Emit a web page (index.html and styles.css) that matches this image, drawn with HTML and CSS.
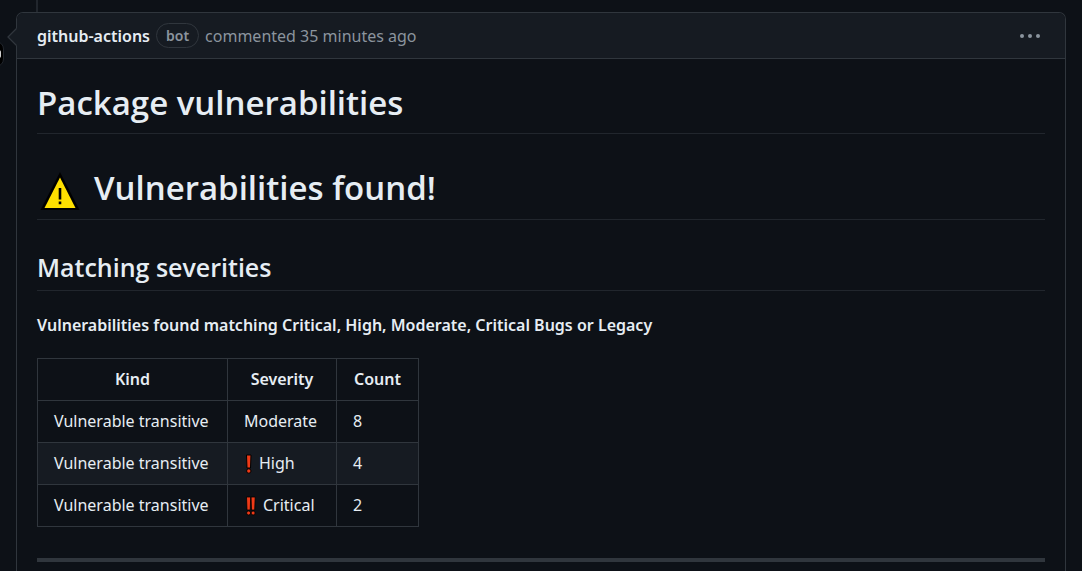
FILE: index.html
```html
<!DOCTYPE html>
<html lang="en">
<head>
<meta charset="utf-8">
<meta name="viewport" content="width=device-width, initial-scale=1">
<title>Package vulnerabilities</title>
<link rel="stylesheet" href="styles.css">
</head>
<body>
<main class="timeline">
  <span class="timeline-line"></span>
  <span class="avatar-edge"></span>
  <article class="comment">
    <svg class="comment-arrow" width="10" height="18" viewBox="0 0 10 18" aria-hidden="true"><path d="M10 0 1 9l9 9z" fill="#161b22"/><path d="M9.500 .5 1 9l8.500 8.500" fill="none" stroke="#30363d" stroke-width="1.300"/></svg>
    <header class="comment-header">
      <a class="author" href="#">github-actions</a>
      <span class="label">bot</span>
      <span class="meta">commented <a class="time" href="#">35 minutes ago</a></span>
      <button class="menu" type="button" aria-label="Show options"><svg width="22" height="6" viewBox="0 0 22 6" aria-hidden="true"><g fill="#8b949e"><circle cx="3" cy="3" r="2"/><circle cx="11" cy="3" r="2"/><circle cx="19" cy="3" r="2"/></g></svg></button>
    </header>
    <div class="comment-body">
      <h1 class="title">Package vulnerabilities</h1>
      <h1 class="title title-alert"><svg class="warning" width="40" height="40" viewBox="0 0 40 40" role="img" aria-label="Warning"><path d="M20 1 .5 39h39z" fill="#000"/><path d="M20 6.500 4.500 37h31z" fill="#ffe000"/><path d="M18.700 17h2.600v11.500h-2.600zM18.700 30.500h2.600v2.700h-2.600z" fill="#000"/></svg>Vulnerabilities found!</h1>
      <h2 class="subtitle">Matching severities</h2>
      <p class="summary"><strong>Vulnerabilities found matching Critical, High, Moderate, Critical Bugs or Legacy</strong></p>
      <table class="results">
        <thead>
          <tr><th class="kind" scope="col">Kind</th><th class="level" scope="col">Severity</th><th class="count" scope="col">Count</th></tr>
        </thead>
        <tbody>
          <tr><td>Vulnerable transitive</td><td>Moderate</td><td>8</td></tr>
          <tr><td>Vulnerable transitive</td><td><span class="severity"><svg width="10" height="20" viewBox="0 0 10 20" role="img" aria-label="Important"><path d="M2.500 1h4.500l-.5 13h-3.500z" fill="#f03a17" stroke="#000" stroke-linejoin="round"/><circle cx="4.800" cy="17" r="2.200" fill="#f03a17" stroke="#000"/></svg>High</span></td><td>4</td></tr>
          <tr><td>Vulnerable transitive</td><td><span class="severity"><svg width="14" height="20" viewBox="0 0 14 20" role="img" aria-label="Very important"><g fill="#f03a17" stroke="#000" stroke-width=".8" stroke-linejoin="round"><path d="M2.500 1h4.200l-.5 13h-3.200zM7 1h4.200l-.5 13h-3.200z"/><circle cx="4.600" cy="17" r="2"/><circle cx="9.100" cy="17" r="2"/></g></svg>Critical</span></td><td>2</td></tr>
        </tbody>
      </table>
      <hr class="divider">
    </div>
  </article>
</main>
</body>
</html>
```
FILE: styles.css
```css
* { box-sizing: border-box; }
body {
  margin: 0;
  background: #0d1117;
  color: #e6edf3;
  font: 16px/26px "Noto Sans", "Open Sans", sans-serif;
}
a { color: inherit; text-decoration: none; }
.timeline {
  position: relative;
  display: flex; flex-direction: column;
  min-height: 100vh; padding: 12px 16px 0;
}
.timeline-line {
  position: absolute; top: 0; left: 36px;
  width: 2px; height: 12px; background: #21262d;
}
.avatar-edge {
  position: absolute; top: 41px; left: -22px;
  width: 26px; height: 26px;
  border: 1px solid #21262d; border-radius: 8px; background: #000;
}
.avatar-edge::after {
  content: ""; position: absolute; right: 2px; top: 8px;
  width: 4px; height: 8px; border-radius: 4px; background: #d0d0d0;
}
.comment {
  position: relative; flex: 1;
  border: 1px solid #30363d; border-bottom: 0;
  border-radius: 7px 7px 0 0;
}
.comment-arrow { position: absolute; top: 15px; left: -10px; }
.comment-header {
  display: flex; align-items: center; gap: 6px;
  min-height: 46px; padding: 0 20px;
  background: #161b22; color: #8b949e;
  border-bottom: 1px solid #30363d; border-radius: 6px 6px 0 0;
}
.author { color: #e6edf3; font-weight: 600; }
.label {
  padding: 0 9px;
  border: 1px solid #30363d; border-radius: 13px;
  font-size: 14px; line-height: 23px; font-weight: 600;
}
.menu {
  display: flex; margin-left: auto; padding: 4px;
  border: 0; background: none;
}
.comment-body { padding: 20px 20px 8px; }
.title, .subtitle {
  margin: 0 0 30px;
  border-bottom: 1px solid #21262d;
  font-family: "Open Sans", "Noto Sans", sans-serif;
  font-weight: 600;
}
.title { padding-bottom: 7px; font-size: 33px; line-height: 47px; }
.title-alert { display: flex; align-items: center; gap: 14px; padding-bottom: 8px; }
.warning { margin: 7px 0 0 3px; flex: none; }
.subtitle { margin-bottom: 21px; padding-bottom: 6px; font-size: 25px; line-height: 34px; }
.summary { margin: 0 0 20px; }
.summary strong { font-weight: 600; }
.results { border-collapse: collapse; }
.results th, .results td {
  padding: 8px 16px;
  border: 1px solid #30363d;
  line-height: 25px; text-align: left;
}
.results th { font-weight: 600; text-align: center; }
.results .kind { width: 190px; }
.results .level { width: 109px; }
.results .count { width: 82px; }
.results tbody tr:nth-child(2) { background: #161b22; }
.severity { display: flex; align-items: center; gap: 5px; }
.divider { height: 4px; margin: 31px 0 0; border: 0; background: #30363d; }
```
